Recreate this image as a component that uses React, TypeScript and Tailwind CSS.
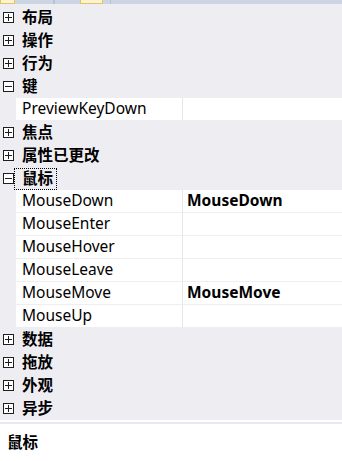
import React from "react";

type Row =
  | { kind: "cat"; label: string; open?: boolean; focus?: boolean }
  | { kind: "prop"; name: string; value?: string };

const rows: Row[] = [
  { kind: "cat", label: "布局" },
  { kind: "cat", label: "操作" },
  { kind: "cat", label: "行为" },
  { kind: "cat", label: "键", open: true },
  { kind: "prop", name: "PreviewKeyDown" },
  { kind: "cat", label: "焦点" },
  { kind: "cat", label: "属性已更改" },
  { kind: "cat", label: "鼠标", open: true, focus: true },
  { kind: "prop", name: "MouseDown", value: "MouseDown" },
  { kind: "prop", name: "MouseEnter" },
  { kind: "prop", name: "MouseHover" },
  { kind: "prop", name: "MouseLeave" },
  { kind: "prop", name: "MouseMove", value: "MouseMove" },
  { kind: "prop", name: "MouseUp" },
  { kind: "cat", label: "数据" },
  { kind: "cat", label: "拖放" },
  { kind: "cat", label: "外观" },
  { kind: "cat", label: "异步" },
];

function Toggle({ open }: { open?: boolean }) {
  return (
    <svg width="11" height="11" viewBox="0 0 11 11" className="block">
      <rect x="0.5" y="0.5" width="10" height="10" fill="white" stroke="#1e1e1e" />
      <line x1="2" y1="5.5" x2="9" y2="5.5" stroke="#1e1e1e" />
      {!open && <line x1="5.5" y1="2" x2="5.5" y2="9" stroke="#1e1e1e" />}
    </svg>
  );
}

export default function App() {
  const font = { fontFamily: '"Noto Sans", "Noto Sans CJK SC", sans-serif' };
  return (
    <div
      className="w-[342px] h-[461px] bg-white flex flex-col overflow-hidden text-[15px] text-black"
      style={font}
    >
      <div className="h-[4px] bg-[#ccd5e4] flex items-end shrink-0">
        <div className="w-[15px] h-[4px] border-x border-b border-[#e5c365] bg-[#fdf4cf]" />
        <div className="ml-[38px] w-[2px] h-[4px] bg-[#b8c2d4]" />
        <div className="ml-[25px] w-[23px] h-[4px] border-x border-b border-[#e5c365] bg-[#fdf4cf]" />
        <div className="ml-[7px] w-[1px] h-[4px] bg-[#b8c2d4]" />
      </div>
      <div className="bg-[#ededf2] pt-[2px] shrink-0">
        {rows.map((r, i) =>
          r.kind === "cat" ? (
            <div key={i} className="h-[23px] flex items-center">
              <div className="w-[16px] flex justify-center pl-[1px]">
                <Toggle open={r.open} />
              </div>
              <div
                className={
                  "font-bold leading-none flex items-center h-[20px] text-[15.5px] " +
                  (r.focus ? "outline outline-1 outline-dotted outline-black ml-[-1px] pl-[7px] pr-[3px]" : "ml-[6px]")
                }
              >
                {r.label}
              </div>
            </div>
          ) : (
            <div key={i} className="h-[23px] flex pl-[16px] pb-[1px]">
              <div className="flex-1 flex bg-white text-[15.5px]">
                <div className="w-[167px] pl-[6px] flex items-center border-r border-[#e6e6ea]">
                  {r.name}
                </div>
                <div className="flex-1 pl-[4px] flex items-center font-bold">{r.value ?? ""}</div>
              </div>
            </div>
          )
        )}
      </div>
      <div className="h-[2px] bg-white shrink-0" />
      <div className="h-[2px] bg-[#e8e8f3] shrink-0" />
      <div className="flex-1 bg-white pl-[7px] pt-[7px] font-bold text-[15.5px]">鼠标</div>
    </div>
  );
}
